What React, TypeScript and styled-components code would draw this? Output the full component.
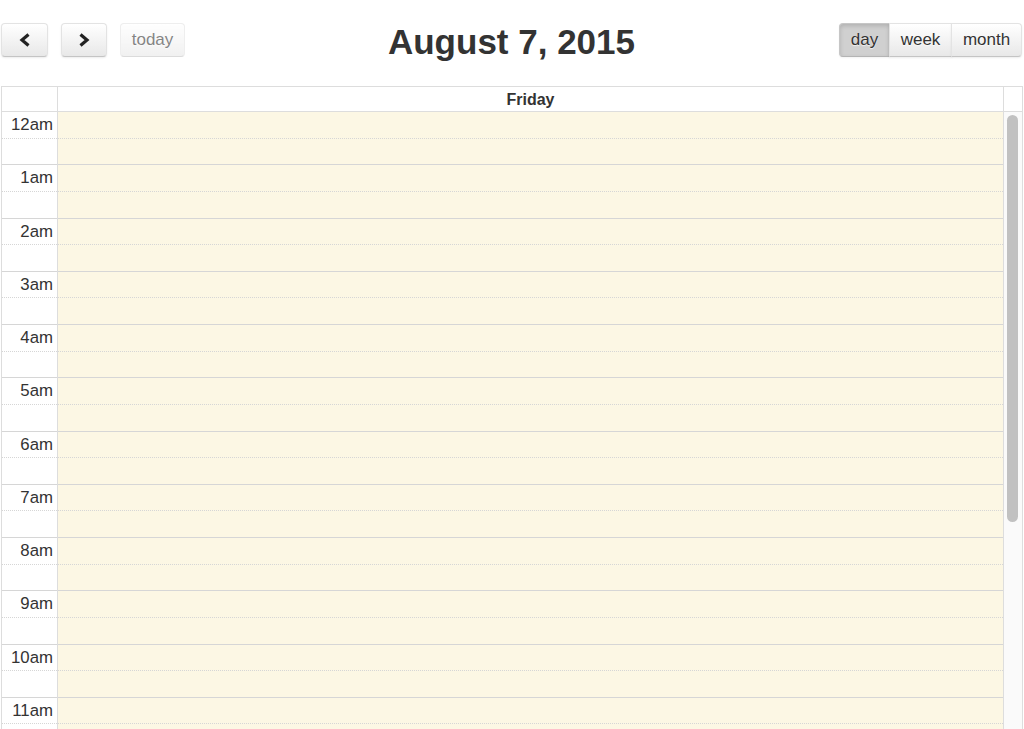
import React from 'react'
import styled, { createGlobalStyle, css } from 'styled-components'

const GlobalStyle = createGlobalStyle`
  html, body {
    margin: 0;
    padding: 0;
    background: #fff;
    overflow: hidden;
  }
  body {
    font-family: 'Liberation Sans', Arial, Helvetica, sans-serif;
    color: #333;
  }
`

const SLOT = 26.64

const Page = styled.div`
  width: 1024px;
  height: 729px;
  overflow: hidden;
`

const Toolbar = styled.div`
  display: grid;
  grid-template-columns: 1fr auto 1fr;
  align-items: center;
  padding: 23px 2px 0 1px;
  height: 34px;
`

const LeftGroup = styled.div`
  display: flex;
  gap: 13px;
`

const RightGroup = styled.div`
  display: flex;
  justify-content: flex-end;
`

const Title = styled.h2`
  margin: 0;
  font-size: 35px;
  font-weight: bold;
  color: #333;
  line-height: 34px;
  position: relative;
  top: 2px;
`

const Button = styled.button<{ $w: number; $active?: boolean; $disabled?: boolean; $pos?: 'l' | 'm' | 'r' }>`
  width: ${({ $w }) => $w}px;
  height: 34px;
  padding: 0;
  display: flex;
  align-items: center;
  justify-content: center;
  font-family: 'Liberation Sans', Arial, sans-serif;
  font-size: 17px;
  color: #333;
  text-shadow: 0 1px 1px rgba(255, 255, 255, 0.75);
  border: 1px solid;
  border-color: #e3e3e3 #e3e3e3 #c4c4c4;
  border-radius: 4px;
  background: linear-gradient(#ffffff, #e8e8e8);
  box-shadow: inset 0 1px 0 rgba(255, 255, 255, 0.2), 0 1px 2px rgba(0, 0, 0, 0.08);
  ${({ $pos }) =>
    $pos === 'l' &&
    css`
      border-top-right-radius: 0;
      border-bottom-right-radius: 0;
    `}
  ${({ $pos }) =>
    $pos === 'm' &&
    css`
      border-radius: 0;
      margin-left: -1px;
    `}
  ${({ $pos }) =>
    $pos === 'r' &&
    css`
      border-top-left-radius: 0;
      border-bottom-left-radius: 0;
      margin-left: -1px;
    `}
  ${({ $active }) =>
    $active &&
    css`
      background: #d0d0d0;
      border-color: #c6c6c6 #c6c6c6 #b4b4b4;
      box-shadow: inset 0 2px 4px rgba(0, 0, 0, 0.15), 0 1px 2px rgba(0, 0, 0, 0.05);
    `}
  ${({ $disabled }) =>
    $disabled &&
    css`
      opacity: 0.6;
      box-shadow: none;
    `}
`

const Grid = styled.div`
  margin: 29px 1px 0 1px;
  border: 1px solid #ddd;
  border-bottom: none;
`

const HeadRow = styled.div`
  display: flex;
  height: 24px;
  border-bottom: 1px solid #ddd;
`

const AxisHead = styled.div`
  width: 55px;
  border-right: 1px solid #ddd;
`

const DayHead = styled.div`
  flex: 1;
  display: flex;
  align-items: center;
  justify-content: center;
  font-size: 16px;
  font-weight: bold;
  color: #333;
  border-right: 1px solid #ddd;
  padding-top: 1px;
`

const GutterHead = styled.div`
  width: 18px;
`

const Body = styled.div`
  display: flex;
  height: 617px;
  overflow: hidden;
`

const Axis = styled.div`
  width: 55px;
  border-right: 1px solid #ddd;
  flex-shrink: 0;
`

const DayCol = styled.div`
  flex: 1;
  background: #fcf7e4;
  border-right: 1px solid #ddd;
`

// $hourEnd: the slot closes an hour, so its bottom line is solid
const Slot = styled.div<{ $hourEnd: boolean }>`
  box-sizing: border-box;
  height: ${SLOT}px;
  border-bottom: 1px ${({ $hourEnd }) => ($hourEnd ? 'solid' : 'dotted')} #d6d6d6;
`

const TimeLabel = styled(Slot)`
  text-align: right;
  padding: 3px 4px 0 0;
  font-size: 16.8px;
  line-height: 20px;
  color: #333;
`

const Gutter = styled.div`
  width: 18px;
  flex-shrink: 0;
  background: #fafafa;
  padding: 3px 0 0 3px;
  box-sizing: border-box;
`

const Thumb = styled.div`
  width: 11px;
  height: 407px;
  border-radius: 6px;
  background: #c1c1c1;
`

const ChevronIcon = ({ dir }: { dir: 'left' | 'right' }) => (
  <svg width="14" height="16" viewBox="0 0 14 16">
    <polyline
      points={dir === 'left' ? '10.5,2.5 4,8 10.5,13.5' : '3.5,2.5 10,8 3.5,13.5'}
      fill="none"
      stroke="#222"
      strokeWidth="3.2"
      strokeLinejoin="miter"
    />
  </svg>
)

const hours = ['12am', '1am', '2am', '3am', '4am', '5am', '6am', '7am', '8am', '9am', '10am', '11am']

const App = () => {
  return (
    <Page>
      <GlobalStyle />
      <Toolbar>
        <LeftGroup>
          <Button $w={47}>
            <ChevronIcon dir="left" />
          </Button>
          <Button $w={46}>
            <ChevronIcon dir="right" />
          </Button>
          <Button $w={65} $disabled>
            today
          </Button>
        </LeftGroup>
        <Title>August 7, 2015</Title>
        <RightGroup>
          <Button $w={51} $pos="l" $active>
            day
          </Button>
          <Button $w={63} $pos="m">
            week
          </Button>
          <Button $w={71} $pos="r">
            month
          </Button>
        </RightGroup>
      </Toolbar>
      <Grid>
        <HeadRow>
          <AxisHead />
          <DayHead>Friday</DayHead>
          <GutterHead />
        </HeadRow>
        <Body>
          <Axis>
            {hours.map(h => (
              <React.Fragment key={h}>
                <TimeLabel $hourEnd={false}>{h}</TimeLabel>
                <Slot $hourEnd />
              </React.Fragment>
            ))}
          </Axis>
          <DayCol>
            {hours.map(h => (
              <React.Fragment key={h}>
                <Slot $hourEnd={false} />
                <Slot $hourEnd />
              </React.Fragment>
            ))}
          </DayCol>
          <Gutter>
            <Thumb />
          </Gutter>
        </Body>
      </Grid>
    </Page>
  )
}

export default App
